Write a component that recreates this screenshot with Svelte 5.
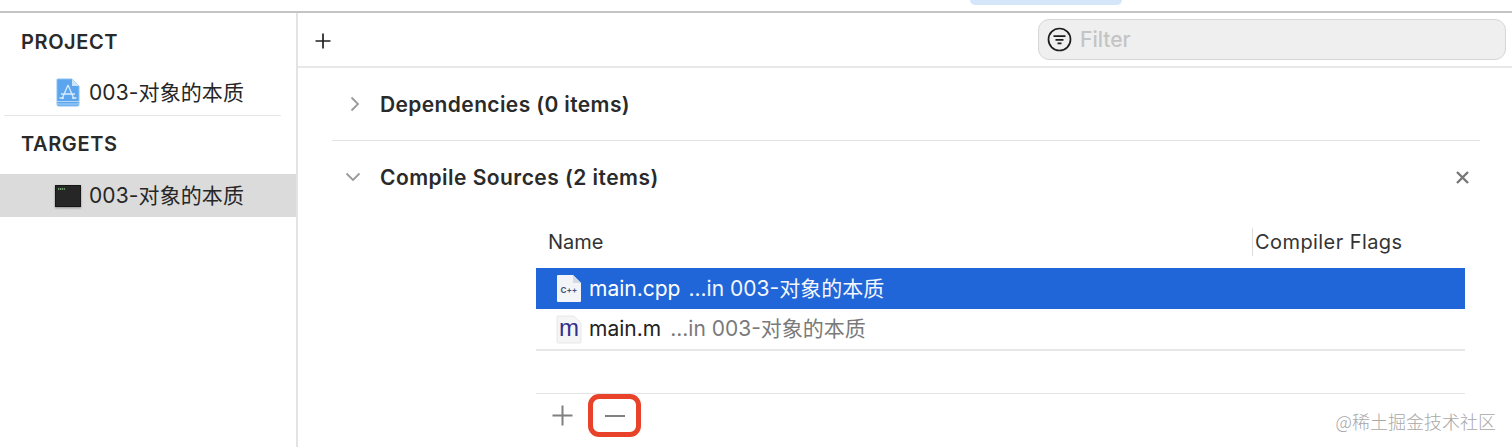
<script>
  const cjk = '003-对象的本质';
</script>

<div class="shell">
  <div class="topbar"><div class="tab"></div></div>
  <div class="body">
    <aside class="side">
      <div class="side-head first">PROJECT</div>
      <div class="side-item">
        <svg class="ico" width="24" height="29" viewBox="0 0 24 29">
          <path d="M1.500 1 H16 L23 8 V26.500 Q23 28 21.500 28 H2.500 Q1 28 1 26.500 V1.500 Z" fill="#5aa5ee" stroke="#8cc0f2"/>
          <path d="M16 1 V8 H23 Z" fill="#cfe4fa"/>
          <path d="M1 23.500 H23 M1 26 H23" stroke="#b6d8f8" stroke-width="1"/>
          <path d="M12 7 L6 21 M12 7 L18 21 M5 16 H19 M3.500 20 H8 M16 20 H20.500" stroke="#d9ebfc" stroke-width="1.300" fill="none"/>
        </svg>
        <span>{cjk}</span>
      </div>
      <div class="side-rule"></div>
      <div class="side-head">TARGETS</div>
      <div class="side-item selected">
        <svg class="ico term" width="26" height="22" viewBox="0 0 26 22">
          <rect x="0.500" y="0.500" width="25" height="21" fill="#262626" stroke="#161616"/>
          <path d="M3 4 H10" stroke="#7fc47f" stroke-width="1.400" stroke-dasharray="1.200 .7"/>
        </svg>
        <span>{cjk}</span>
      </div>
    </aside>

    <main class="main">
      <div class="toolbar">
        <svg class="plus" width="18" height="18" viewBox="0 0 18 18"><path d="M9 1.500 V16.500 M1.500 9 H16.500" stroke="#222" stroke-width="1.700"/></svg>
        <div class="filter">
          <svg width="25" height="25" viewBox="0 0 25 25">
            <circle cx="12.500" cy="12.500" r="11" fill="none" stroke="#1d1d1d" stroke-width="1.700"/>
            <path d="M6.500 9.200 H18.500 M8.500 12.800 H16.500 M10.500 16.300 H14.500" stroke="#1d1d1d" stroke-width="1.800"/>
          </svg>
          <span>Filter</span>
        </div>
      </div>

      <div class="content">
        <div class="section dep">
          <svg width="10" height="16" viewBox="0 0 10 16"><path d="M1.500 1.500 L8 8 L1.500 14.500" fill="none" stroke="#9a9a9a" stroke-width="1.800"/></svg>
          <span class="title">Dependencies (0 items)</span>
        </div>
        <div class="section comp">
          <svg width="16" height="10" viewBox="0 0 16 10"><path d="M1.500 1.500 L8 8 L14.500 1.500" fill="none" stroke="#9a9a9a" stroke-width="1.800"/></svg>
          <span class="title">Compile Sources (2 items)</span>
          <svg class="close" width="13" height="13" viewBox="0 0 13 13"><path d="M1 1 L12 12 M12 1 L1 12" stroke="#777" stroke-width="2.400"/></svg>
        </div>

        <div class="table">
          <div class="thead">
            <span class="th-name">Name</span>
            <span class="th-flags">Compiler Flags</span>
          </div>
          <div class="row active">
            <svg class="doc" width="26" height="29" viewBox="0 0 26 29">
              <path d="M2 1 H17 L25 9 V27 Q25 28 24 28 H2 Q1 28 1 27 V2 Q1 1 2 1 Z" fill="#f4f5f8"/>
              <path d="M17 1 V9 H25 Z" fill="#d5dbe6"/>
              <text x="4.500" y="18.500" class="cpp">C++</text>
            </svg>
            <span class="fname">main.cpp</span>
            <span class="loc">...in 003-对象的本质</span>
          </div>
          <div class="row plain">
            <svg class="doc" width="26" height="29" viewBox="0 0 26 29">
              <path d="M2 1 H18 L25 8 V27 Q25 28 24 28 H2 Q1 28 1 27 V2 Q1 1 2 1 Z" fill="#f5f5f5" stroke="#e2e2e2" stroke-width=".8"/>
              <text x="3" y="21" class="objc">m</text>
            </svg>
            <span class="fname">main.m</span>
            <span class="loc">...in 003-对象的本质</span>
          </div>
          <div class="spacer"></div>
          <div class="tfoot">
            <svg width="21" height="21" viewBox="0 0 21 21"><path d="M10.500 .5 V20.500 M.5 10.500 H20.500" stroke="#808080" stroke-width="2"/></svg>
            <div class="minus-btn"><span class="minus"></span></div>
          </div>
        </div>
      </div>
    </main>
  </div>
  <div class="mark">@稀土掘金技术社区</div>
</div>

<style>
  :global(body) { margin: 0; background: #fff; }
  .shell {
    position: relative; width: 1512px; height: 447px; overflow: hidden; background: #fff;
    font-family: Inter, "Noto Sans CJK SC", sans-serif; color: #222;
  }
  .topbar { height: 11px; border-bottom: 2px solid #c4c4c4; }
  .tab { width: 152px; height: 5px; margin-left: 970px; background: #d5e6fa; border-radius: 0 0 9px 9px; }
  .body { display: flex; height: 434px; }
  .side { width: 298px; box-sizing: border-box; flex: none; border-right: 2px solid #e3e3e3; }
  .side-head { padding-left: 21px; font-size: 20px; font-weight: 600; letter-spacing: .6px; line-height: 24px; color: #2a2a2a; height: 24px; }
  .side-head.first { margin-top: 17px; }
  .side-item { display: flex; align-items: center; font-size: 21px; color: #262626; height: 43px; padding-left: 56px; gap: 9px; }
  .side-head.first + .side-item { margin-top: 17px; }
  .side-item .ico { flex: none; }
  .side-item span { letter-spacing: .1px; line-height: 26px; }
  .side-rule { height: 1px; background: #e6e6e6; margin: 1px 15px 16px 4px; }
  .side-head + .side-item.selected { margin-top: 18px; }
  .side-item.selected { background: #dbdbdb; padding-left: 55px; gap: 8px; }
  .term { filter: drop-shadow(0 1px 1px rgba(0,0,0,.35)); }

  .main { flex: 1; min-width: 0; }
  .toolbar { height: 55px; box-sizing: border-box; border-bottom: 2px solid #e8e8e8; display: flex; align-items: center; justify-content: space-between; padding: 0 6px 0 16px; }
  .plus { margin-top: 3px; }
  .filter { width: 468px; height: 41px; box-sizing: border-box; background: #efefef; border: 1.500px solid #d6d6d6; border-radius: 11px; display: flex; align-items: center; padding-left: 8px; gap: 8px; font-size: 21px; font-weight: 500; color: #c4c4c4; }

  .content { padding: 0 32px 0 34px; }
  .section { display: flex; align-items: center; }
  .title { font-size: 21px; font-weight: 600; color: #2a2a2a; letter-spacing: .38px; }
  .dep { height: 73px; border-bottom: 1.500px solid #e2e2e2; box-sizing: border-box; padding-left: 18px; gap: 20px; }
  .comp { height: 72px; box-sizing: border-box; padding-left: 13px; gap: 19px; }
  .comp .title { letter-spacing: .46px; }
  .close { margin-left: auto; margin-right: 11px; }

  .table { margin-left: 204px; margin-right: 15px; }
  .thead { height: 42px; margin-top: 8px; margin-bottom: 5px; display: flex; align-items: center; font-size: 20px; color: #333; }
  .th-name { width: 716px; padding-left: 12px; box-sizing: border-box; }
  .th-flags { border-left: 1px solid #dcdcdc; padding-left: 2px; height: 28px; line-height: 28px; margin-top: -1px; letter-spacing: .42px; }
  .row { height: 41px; display: flex; align-items: center; padding-left: 20px; font-size: 21px; box-sizing: border-box; }
  .row span { line-height: 26px; }
  .doc { flex: none; margin-right: 7px; }
  .active { background: #2166d8; color: #fff; }
  .active .loc { margin-left: 8px; color: #f2f6fd; }
  .cpp { font-family: Inter, sans-serif; font-size: 8px; font-weight: 700; fill: #40557f; }
  .objc { font-family: "Liberation Sans", sans-serif; font-size: 24px; fill: #33308f; }
  .plain { border-bottom: 2px solid #e6e6e6; height: 42px; }
  .plain .fname { color: #222; }
  .plain .loc { margin-left: 9px; color: #7a7a7a; }
  .spacer { height: 42px; }
  .tfoot { border-top: 1.500px solid #e4e4e4; display: flex; align-items: center; padding-left: 16px; gap: 15px; height: 44px; box-sizing: border-box; }
  .minus-btn { width: 53px; height: 43px; box-sizing: border-box; border: 5px solid #e8432a; border-radius: 11px; display: flex; align-items: center; justify-content: center; }
  .minus { display: block; width: 20px; height: 2px; background: #808080; }

  .mark { position: absolute; right: 16px; bottom: 14px; font-size: 18px; line-height: 24px; color: #a8a8a8; font-family: "Noto Sans CJK SC", sans-serif; font-weight: 300; }
</style>
